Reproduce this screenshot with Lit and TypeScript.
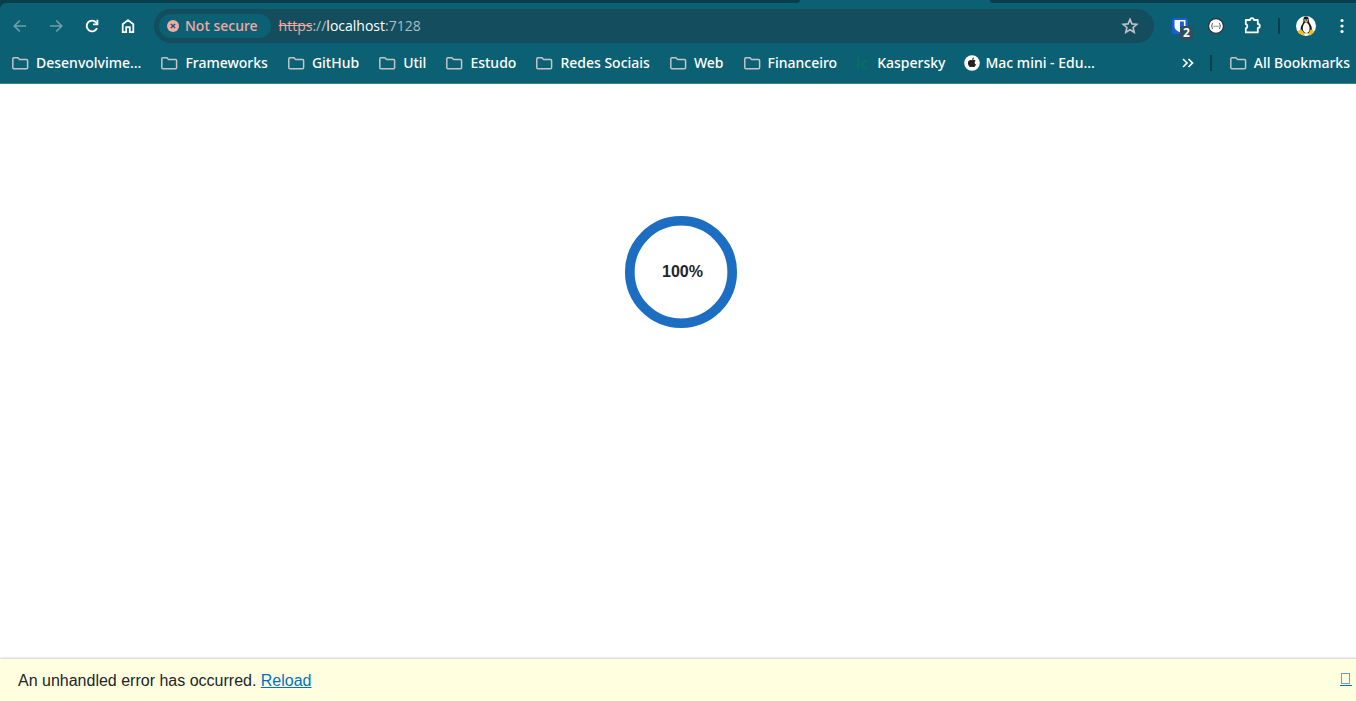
import { LitElement, html, css, svg, TemplateResult } from "lit";
import { customElement, property } from "lit/decorators.js";

interface Bookmark {
  label: string;
  icon: "folder" | "kaspersky" | "apple";
}

const BOOKMARKS: Bookmark[] = [
  { label: "Desenvolvime…", icon: "folder" },
  { label: "Frameworks", icon: "folder" },
  { label: "GitHub", icon: "folder" },
  { label: "Util", icon: "folder" },
  { label: "Estudo", icon: "folder" },
  { label: "Redes Sociais", icon: "folder" },
  { label: "Web", icon: "folder" },
  { label: "Financeiro", icon: "folder" },
  { label: "Kaspersky", icon: "kaspersky" },
  { label: "Mac mini - Edu…", icon: "apple" },
];

const icon = (size: number, body: TemplateResult | unknown) => html`
  <svg width=${size} height=${size} viewBox="0 0 ${size} ${size}" aria-hidden="true">${body}</svg>
`;

const ICONS = {
  back: icon(20, svg`<path d="M16 10H4.600M9.800 4.500L4.300 10l5.500 5.500" fill="none" stroke="#6d9fac" stroke-width="1.700"/>`),
  forward: icon(20, svg`<path d="M4 10h11.400M10.200 4.500l5.500 5.500-5.500 5.500" fill="none" stroke="#6d9fac" stroke-width="1.700"/>`),
  reload: icon(20, svg`
    <path d="M15 12.200A5.400 5.400 0 1 1 14.200 6.500l1.300 1.500" fill="none" stroke="#fff" stroke-width="1.900"/>
    <path d="M16.300 3.800v5.400h-5.400V7.400h3.600V3.800z" fill="#fff"/>`),
  home: icon(20, svg`<path d="M4.700 16.200V8.200L10 4.100l5.300 4.100v8h-3.500v-5.100H8.200v5.100z" fill="none" stroke="#fff" stroke-width="1.800"/>`),
  star: icon(20, svg`<path d="M10 3.400l1.900 4.500 4.900.4-3.700 3.200 1.100 4.800L10 13.800l-4.200 2.500 1.100-4.800-3.700-3.200 4.900-.4z" fill="none" stroke="#c0c4c8" stroke-width="1.600"/>`),
  danger: icon(12, svg`
    <circle cx="6" cy="6" r="6" fill="#f4a9a2"/>
    <path d="M3.900 3.900l4.200 4.200M8.100 3.900L3.900 8.100" stroke="#0c6074" stroke-width="1.400"/>`),
  shield: icon(16, svg`
    <rect width="16" height="16" rx="2" fill="#175ddc"/>
    <path d="M2.500 2h11v6.500c0 2.800-2.700 4.600-5.500 5.800-2.800-1.200-5.500-3-5.500-5.800z" fill="#fff"/>
    <path d="M8 3.600h3.900v4.900c0 1.800-1.800 3-3.900 4z" fill="#175ddc"/>`),
  braces: icon(16, svg`
    <circle cx="8" cy="8" r="7.400" fill="#fff" stroke="#24292c" stroke-width="1.100"/>
    <path d="M5 5.200c-1 0-.8 1-.9 1.900L3.300 8l.8.900c.1.900-.1 1.900.9 1.900M11 5.200c1 0 .8 1 .9 1.900l.8.900-.8.900c-.1.900.1 1.900-.9 1.900" fill="none" stroke="#30363a" stroke-width=".9"/>
    <path d="M5.700 8.300h4.800" stroke="#30363a" stroke-width=".9" stroke-dasharray="1.100 .75"/>`),
  puzzle: icon(20, svg`
    <path d="M3.800 4h4.300a1.900 1.900 0 0 1 3.800 0h3.900v4a2 2 0 0 1 0 4v4.400H3.800v-4a2.200 2.200 0 0 0 0-4.200z" fill="none" stroke="#fff" stroke-width="1.800" stroke-linejoin="round"/>`),
  tux: icon(20, svg`
    <circle cx="10" cy="10" r="10" fill="#fff"/>
    <path d="M10.200.6C7.600.6 7.200 2.500 7.500 5c.1 1.700-2.100 3.800-2.700 6.600-.5 2.300-.2 4.600 1.500 5.600h7.500c2.300-1.200 2.300-4.500 1.600-6.600-.6-2.200-2.300-3.500-2.500-5.500C12.700 2.400 12.500.6 10.200.6z" fill="#15181a"/>
    <path d="M9.900 6.600c-1.900 0-2.900 3.300-3.100 5.200-.2 2.600 1.100 5.200 3.300 5.200s3.700-2 3.500-4.800c-.2-2.200-1.600-5.600-3.700-5.600z" fill="#fff"/>
    <circle cx="9" cy="4" r=".8" fill="#fff"/><circle cx="11.200" cy="4" r=".8" fill="#fff"/>
    <path d="M8.300 5.600l1.800-1 1.900 1-1.800 1.300z" fill="#f5b914"/>
    <path d="M5 13.100l3.600 4.300c.2 1.500-1.200 2-2.500 1.600L2.300 17c-.4-.8.100-1.500-.1-2.500 1.200-.1 2-.4 2.800-1.400zM14.500 13.600c.6.600 1.400.4 2-.1.300 1.200 1.100 1.800 1.500 2.500l-3.100 2.900c-1.200.6-2.700 0-2.400-1.500z" fill="#f7bd16"/>`),
  dots: icon(20, svg`<g fill="#fff"><circle cx="10" cy="4.500" r="1.600"/><circle cx="10" cy="10" r="1.600"/><circle cx="10" cy="15.500" r="1.600"/></g>`),
  chevrons: icon(20, svg`<path d="M5 6l4 4-4 4M10.500 6l4 4-4 4" fill="none" stroke="#fff" stroke-width="1.700"/>`),
  folder: icon(20, svg`<path d="M3.800 4.700h4.100l1.700 1.900h7c.6 0 1 .4 1 1v7.200c0 .6-.4 1-1 1H3.800c-.6 0-1-.4-1-1V5.700c0-.6.400-1 1-1z" fill="none" stroke="#c2c4c6" stroke-width="1.500"/>`),
  kaspersky: icon(16, svg`<path d="M3.200 0v13.500M12 4.500L7 9.500l5 6" fill="none" stroke="#086f5a" stroke-width="2"/>`),
  apple: icon(16, svg`
    <circle cx="8" cy="8" r="7.800" fill="#fff"/>
    <path d="M8.100 5.300c1-.8 2.700-.7 3.500.4-1.500 1-1.300 3.100.4 3.800-.5 1.400-1.300 2.600-2.300 2.600-.7 0-.9-.3-1.600-.3s-1 .3-1.600.3c-1.300 0-2.600-2.200-2.600-4 0-2.600 2.300-3.700 4.200-2.800zM8 4.900c0-1.300.8-2.200 1.900-2.300.1 1.300-.8 2.300-1.900 2.300z" fill="#222"/>`),
};

@customElement("browser-toolbar")
export class BrowserToolbar extends LitElement {
  static styles = css`
    :host {
      display: flex;
      align-items: center;
      padding: 6px 0 0 2px;
      background: #0c6074;
      border-top-left-radius: 6px;
      font-family: "Noto Sans", sans-serif;
      font-size: 14px;
      line-height: 20px;
    }
    button {
      display: flex;
      align-items: center;
      justify-content: center;
      flex: none;
      width: 36px;
      height: 34px;
      padding: 0;
      border: 0;
      background: none;
      color: inherit;
      font: inherit;
      position: relative;
    }
    svg {
      display: block;
      flex: none;
    }
    .omnibox {
      display: flex;
      align-items: center;
      flex: 1;
      min-width: 0;
      height: 34px;
      box-sizing: border-box;
      margin: 0 8px;
      padding: 0 6px 0 5px;
      border-radius: 17px;
      background: #144d5d;
    }
    .chip {
      width: auto;
      height: 24px;
      gap: 6px;
      padding: 0 13px 0 8px;
      border-radius: 12px;
      background: #0c6074;
      color: #f4a9a2;
      font-weight: 500;
    }
    .url {
      flex: 1;
      margin-left: 8px;
      color: #a7bfc6;
      font-family: "Open Sans", sans-serif;
      white-space: nowrap;
    }
    .scheme {
      color: #f4a9a2;
      text-decoration: line-through;
    }
    .host {
      color: #fff;
    }
    .badge {
      position: absolute;
      left: 18px;
      top: 17px;
      width: 13px;
      height: 14px;
      border-radius: 3px;
      background: #2f4d60;
      color: #fff;
      font-size: 12px;
      font-weight: 700;
      line-height: 14px;
      text-align: center;
    }
    .divider {
      width: 2px;
      height: 16px;
      margin: 0 8px;
      background: #063f4c;
    }
    .menu {
      width: 28px;
      margin-left: 4px;
    }
  `;

  render() {
    return html`
      <button aria-label="Back">${ICONS.back}</button>
      <button aria-label="Forward">${ICONS.forward}</button>
      <button aria-label="Reload">${ICONS.reload}</button>
      <button aria-label="Home">${ICONS.home}</button>
      <div class="omnibox">
        <button class="chip">${ICONS.danger}<span>Not secure</span></button>
        <div class="url"><span class="scheme">https</span>://<span class="host">localhost</span>:7128</div>
        <button aria-label="Bookmark this tab">${ICONS.star}</button>
      </div>
      <button aria-label="Password manager">${ICONS.shield}<span class="badge">2</span></button>
      <button aria-label="JSON viewer">${ICONS.braces}</button>
      <button aria-label="Extensions">${ICONS.puzzle}</button>
      <span class="divider"></span>
      <button aria-label="Profile">${ICONS.tux}</button>
      <button class="menu" aria-label="Menu">${ICONS.dots}</button>
    `;
  }
}

@customElement("bookmarks-bar")
export class BookmarksBar extends LitElement {
  static styles = css`
    :host {
      display: flex;
      align-items: center;
      height: 40px;
      padding: 0 6px 0 10px;
      border-bottom: 1px solid #3b7f90;
      background: #0c6074;
      color: #fff;
      font-family: "Noto Sans", sans-serif;
      font-size: 14px;
      line-height: 20px;
    }
    .list {
      display: flex;
      flex: 1;
      gap: 18px;
      min-width: 0;
      overflow: hidden;
    }
    a,
    button {
      display: flex;
      align-items: center;
      flex: none;
      gap: 6px;
      padding: 0;
      border: 0;
      background: none;
      color: inherit;
      font: inherit;
      font-weight: 500;
      text-decoration: none;
      white-space: nowrap;
    }
    svg {
      display: block;
      flex: none;
    }
    .divider {
      width: 2px;
      height: 16px;
      margin: 0 16px 0 12px;
      background: #063f4c;
    }
  `;

  render() {
    return html`
      <nav class="list" aria-label="Bookmarks">
        ${BOOKMARKS.map((b) => html`<a href="#">${ICONS[b.icon]}<span>${b.label}</span></a>`)}
      </nav>
      <button aria-label="More bookmarks">${ICONS.chevrons}</button>
      <span class="divider"></span>
      <button>${ICONS.folder}<span>All Bookmarks</span></button>
    `;
  }
}

@customElement("loading-progress")
export class LoadingProgress extends LitElement {
  @property({ type: Number }) value = 100;

  static styles = css`
    :host {
      display: grid;
      place-items: center;
      width: 128px;
      height: 128px;
      color: #212529;
      font: 700 16px/24px "Liberation Sans", Arial, sans-serif;
    }
    svg,
    .text {
      grid-area: 1 / 1;
    }
    circle {
      fill: none;
      stroke: #e0e0e0;
      stroke-width: 9.6px;
    }
    .bar {
      stroke: #1b6ec2;
    }
    .text {
      padding-left: 3px;
    }
  `;

  render() {
    return html`
      <svg width="128" height="128" viewBox="0 0 128 128" aria-hidden="true">
        <circle cx="64" cy="64" r="51.2"></circle>
        <circle class="bar" cx="64" cy="64" r="51.2" pathLength="100"
          stroke-dasharray="${this.value} 100" transform="rotate(-90 64 64)"></circle>
      </svg>
      <span class="text">${this.value}%</span>
    `;
  }
}

@customElement("error-bar")
export class ErrorBar extends LitElement {
  static styles = css`
    :host {
      display: flex;
      align-items: center;
      justify-content: space-between;
      padding: 10px 4px 8px 18px;
      background: #ffffe0;
      box-shadow: 0 -1px 2px rgba(0, 0, 0, 0.2);
      color: #212529;
      font: 16px/24px "Liberation Sans", Arial, sans-serif;
    }
    a {
      color: #0071c1;
    }
    .dismiss {
      display: flex;
      width: 12px;
      margin-bottom: 3px;
      padding: 0 0 1px 1px;
      border: 0;
      border-bottom: 1px solid #0071c1;
      background: none;
    }
    .glyph {
      width: 7px;
      height: 9px;
      border: 1px solid #62a3c6;
    }
  `;

  render() {
    return html`
      <span>An unhandled error has occurred. <a href="#">Reload</a></span>
      <button class="dismiss" aria-label="Dismiss"><span class="glyph"></span></button>
    `;
  }
}

@customElement("app-root")
export class AppRoot extends LitElement {
  static styles = css`
    :host {
      display: flex;
      flex-direction: column;
      min-height: 100vh;
      background: #fff;
    }
    .chrome {
      background: #063f4c;
    }
    .tabs {
      display: grid;
      grid-template-columns: 59fr 14fr 27fr;
      height: 3px;
      background: #0c6074;
    }
    .inactive {
      grid-column: 1;
      border-bottom-right-radius: 6px;
      background: #063f4c;
    }
    .inactive + .inactive {
      grid-column: 3;
      border-radius: 0 0 0 6px;
    }
    .page {
      display: flex;
      flex: 1;
      align-items: flex-start;
      justify-content: center;
      padding: 124px 0 16px 6px;
    }
  `;

  render() {
    return html`
      <header class="chrome">
        <div class="tabs"><span class="inactive"></span><span class="inactive"></span></div>
        <browser-toolbar></browser-toolbar>
        <bookmarks-bar></bookmarks-bar>
      </header>
      <main class="page"><loading-progress .value=${100}></loading-progress></main>
      <error-bar></error-bar>
    `;
  }
}
